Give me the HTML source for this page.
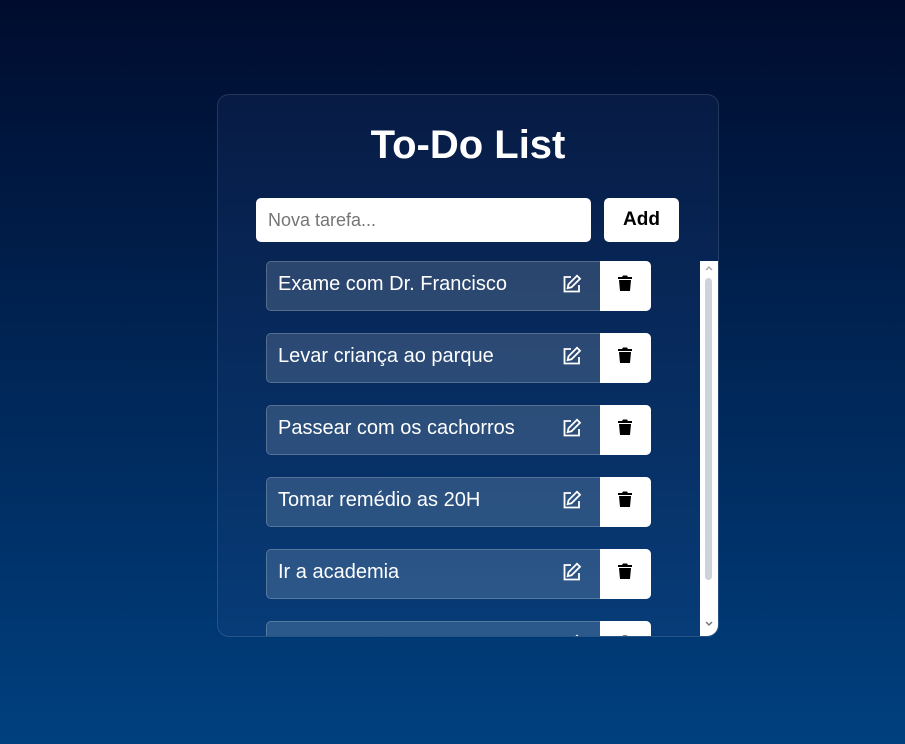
<!DOCTYPE html>
<html><head><meta charset="utf-8"><style>
*{box-sizing:border-box;margin:0;padding:0}
html,body{width:905px;height:744px;overflow:hidden}
body{background:linear-gradient(180deg,#000c2e 0%,#00407f 100%);font-family:"Liberation Sans",Arial,sans-serif;position:relative}
.card{position:absolute;left:217px;top:94px;width:502px;height:543px;border-radius:12px;background:rgba(60,90,160,0.12);border:1px solid rgba(255,255,255,0.12);overflow:hidden}
h1{position:absolute;top:28px;left:0;width:100%;text-align:center;color:#fff;font-size:40px;font-weight:bold}
.inp{position:absolute;left:38px;top:103px;width:335px;height:44px;background:#fff;border-radius:5px;color:#757575;font-size:18px;line-height:44px;padding-left:12px}
.add{position:absolute;left:386px;top:103px;width:75px;height:44px;background:#fff;border-radius:5px;font-size:19px;font-weight:bold;text-align:center;line-height:44px;color:#000}
.list{position:absolute;left:48px;top:166px;width:453px;height:376px;overflow:hidden}
.sb{position:absolute;left:482px;top:166px;width:19px;height:376px;background:#fff}
.thumb{position:absolute;left:5px;top:17px;width:7px;height:302px;border-radius:4px;background:#cdd3da}
.item{position:relative;width:385px;height:50px;margin-bottom:22px;border-radius:5px;background:rgba(255,255,255,0.15);border:1px solid rgba(255,255,255,0.2);color:#fff;font-size:20px;line-height:45px;padding-left:11px}
.item .ed{position:absolute;left:295px;top:12px}
.item .del{position:absolute;right:-1px;top:-1px;width:51px;height:50px;background:#fff;border-radius:0 5px 5px 0}
.item .del svg{position:absolute;left:18px;top:14px}
</style></head><body>
<div class="card">
<h1>To-Do List</h1>
<div class="inp">Nova tarefa...</div>
<div class="add">Add</div>
<div class="list">
<div class="item">Exame com Dr. Francisco<svg class="ed" width="20" height="20" viewBox="0 0 20 20" fill="none" stroke="#fff" stroke-width="1.8"><path d="M9 3H2.5v14.5H17V11"/><path d="M15 1.8l3 3-8.5 8.5-3.8.8.8-3.8z"/></svg><div class="del"><svg width="14" height="16" viewBox="0 0 14 16"><path d="M0 2h4l1-1.5h4L10 2h4v2H0z M1 5h12l-1 11H2z" fill="#000"/></svg></div></div>
<div class="item">Levar criança ao parque<svg class="ed" width="20" height="20" viewBox="0 0 20 20" fill="none" stroke="#fff" stroke-width="1.8"><path d="M9 3H2.5v14.5H17V11"/><path d="M15 1.8l3 3-8.5 8.5-3.8.8.8-3.8z"/></svg><div class="del"><svg width="14" height="16" viewBox="0 0 14 16"><path d="M0 2h4l1-1.5h4L10 2h4v2H0z M1 5h12l-1 11H2z" fill="#000"/></svg></div></div>
<div class="item">Passear com os cachorros<svg class="ed" width="20" height="20" viewBox="0 0 20 20" fill="none" stroke="#fff" stroke-width="1.8"><path d="M9 3H2.5v14.5H17V11"/><path d="M15 1.8l3 3-8.5 8.5-3.8.8.8-3.8z"/></svg><div class="del"><svg width="14" height="16" viewBox="0 0 14 16"><path d="M0 2h4l1-1.5h4L10 2h4v2H0z M1 5h12l-1 11H2z" fill="#000"/></svg></div></div>
<div class="item">Tomar remédio as 20H<svg class="ed" width="20" height="20" viewBox="0 0 20 20" fill="none" stroke="#fff" stroke-width="1.8"><path d="M9 3H2.5v14.5H17V11"/><path d="M15 1.8l3 3-8.5 8.5-3.8.8.8-3.8z"/></svg><div class="del"><svg width="14" height="16" viewBox="0 0 14 16"><path d="M0 2h4l1-1.5h4L10 2h4v2H0z M1 5h12l-1 11H2z" fill="#000"/></svg></div></div>
<div class="item">Ir a academia<svg class="ed" width="20" height="20" viewBox="0 0 20 20" fill="none" stroke="#fff" stroke-width="1.8"><path d="M9 3H2.5v14.5H17V11"/><path d="M15 1.8l3 3-8.5 8.5-3.8.8.8-3.8z"/></svg><div class="del"><svg width="14" height="16" viewBox="0 0 14 16"><path d="M0 2h4l1-1.5h4L10 2h4v2H0z M1 5h12l-1 11H2z" fill="#000"/></svg></div></div>
<div class="item">&nbsp;<svg class="ed" width="20" height="20" viewBox="0 0 20 20" fill="none" stroke="#fff" stroke-width="1.8"><path d="M9 3H2.5v14.5H17V11"/><path d="M15 1.8l3 3-8.5 8.5-3.8.8.8-3.8z"/></svg><div class="del"><svg width="14" height="16" viewBox="0 0 14 16"><path d="M0 2h4l1-1.5h4L10 2h4v2H0z M1 5h12l-1 11H2z" fill="#000"/></svg></div></div>
</div>
<div class="sb"><svg style="position:absolute;left:5px;top:4px" width="8" height="6" viewBox="0 0 8 6"><path d="M1 5l3-3 3 3" stroke="#aaa" stroke-width="1.5" fill="none"/></svg><div class="thumb"></div><svg style="position:absolute;left:5px;top:360px" width="8" height="6" viewBox="0 0 8 6"><path d="M1 1l3 3 3-3" stroke="#777" stroke-width="1.5" fill="none"/></svg></div>
</div>
</body></html>
